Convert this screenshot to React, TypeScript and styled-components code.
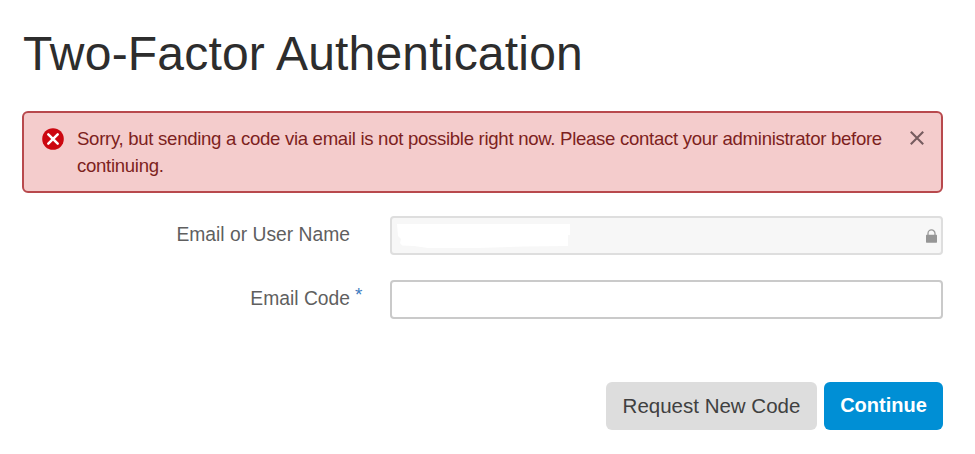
import React from "react";
import styled, { createGlobalStyle } from "styled-components";

const GlobalStyle = createGlobalStyle`
  *, *::before, *::after { box-sizing: border-box; }
  body {
    margin: 0;
    background: #fff;
    font-family: "Liberation Sans", Arial, sans-serif;
  }
`;

const Page = styled.main`
  width: 975px;
  height: 454px;
  padding: 26px 32px 0 22px;
  overflow: hidden;
`;

const Title = styled.h1`
  margin: 0;
  height: 85px;
  padding-left: 1px;
  font-size: 48px;
  line-height: 56px;
  font-weight: 400;
  letter-spacing: 0.2px;
  color: #2d2d2d;
  white-space: nowrap;
`;

const Alert = styled.section`
  display: flex;
  align-items: flex-start;
  height: 82px;
  padding: 12px 17px 0 18px;
  border: 2px solid #b8494d;
  border-radius: 6px;
  background: #f4cccc;
`;

const AlertIcon = styled.svg`
  flex: none;
  width: 22px;
  height: 22px;
  margin: 3px 13px 0 0;
`;

const AlertText = styled.p`
  flex: 1;
  margin: 0;
  font-size: 18.6px;
  line-height: 27px;
  letter-spacing: -0.3px;
  color: #7d1f20;
  white-space: nowrap;
`;

const CloseButton = styled.button`
  flex: none;
  display: flex;
  width: 14px;
  height: 14px;
  margin-top: 6px;
  padding: 0;
  border: 0;
  background: none;
`;

const Form = styled.form`
  padding-top: 23px;
`;

const Field = styled.div`
  display: grid;
  grid-template-columns: 328px 40px 553px;
  height: 39px;
  margin-bottom: 25px;
`;

const Label = styled.label`
  font-size: 19.3px;
  line-height: 37px;
  text-align: right;
  color: #5f5f5f;
  white-space: nowrap;
`;

const Required = styled.span`
  padding: 4px 0 0 5px;
  font-size: 19px;
  line-height: 22px;
  color: #3e7cc0;
`;

const InputBox = styled.div<{ $locked?: boolean }>`
  display: flex;
  align-items: center;
  justify-content: space-between;
  padding: 0 4px 0 2px;
  border: 2px solid ${(p) => (p.$locked ? "#dedede" : "#cacaca")};
  border-radius: 4px;
  background: ${(p) => (p.$locked ? "#f7f7f7" : "#fff")};
`;

const Redaction = styled.svg`
  width: 176px;
  height: 26px;
`;

const TextInput = styled.input`
  width: 100%;
  height: 100%;
  padding: 0;
  border: 0;
  outline: 0;
  background: transparent;
  font: inherit;
`;

const Actions = styled.div`
  display: flex;
  justify-content: flex-end;
  gap: 7px;
  padding-top: 38px;
`;

const Button = styled.button<{ $primary?: boolean }>`
  width: ${(p) => (p.$primary ? 119 : 211)}px;
  height: 48px;
  padding: ${(p) => (p.$primary ? "0 0 2px" : "0")};
  border: 0;
  border-radius: 6px;
  background: ${(p) => (p.$primary ? "#008fd5" : "#dddddd")};
  color: ${(p) => (p.$primary ? "#fff" : "#404040")};
  font-family: inherit;
  font-size: ${(p) => (p.$primary ? 20 : 20.5)}px;
  font-weight: ${(p) => (p.$primary ? 700 : 400)};
  white-space: nowrap;
`;

export default function App() {
  return (
    <>
      <GlobalStyle />
      <Page>
        <Title>Two-Factor Authentication</Title>
        <Alert role="alert">
          <AlertIcon viewBox="0 0 22 22">
            <circle cx="11" cy="11" r="10.8" fill="#cc0710" />
            <path d="M6.3 6.3l9.4 9.4M15.7 6.3l-9.4 9.4" stroke="#fff" strokeWidth="2.5" strokeLinecap="round" />
          </AlertIcon>
          <AlertText>
            Sorry, but sending a code via email is not possible right now. Please contact your administrator before
            <br />
            continuing.
          </AlertText>
          <CloseButton type="button" aria-label="Close">
            <svg width="14" height="14" viewBox="0 0 14 14">
              <path d="M.8.8l12.4 12.4M13.2.8L.8 13.2" stroke="#765c5f" strokeWidth="2.1" />
            </svg>
          </CloseButton>
        </Alert>
        <Form onSubmit={(e) => e.preventDefault()}>
          <Field>
            <Label>Email or User Name</Label>
            <span />
            <InputBox $locked>
              <Redaction viewBox="0 0 176 26">
                <path
                  d="M3 1H176V12H174V23L130 23.5L84 25H34L20 23L8 22.5L6 20L7 16L4 13Z"
                  fill="#fff"
                />
              </Redaction>
              <svg width="11" height="14" viewBox="0 0 11 14">
                <path d="M2 6V4.4a3.5 3.5 0 0 1 7 0V6" fill="none" stroke="#999" strokeWidth="1.3" />
                <rect y="5.7" width="11" height="8" rx=".6" fill="#969696" />
              </svg>
            </InputBox>
          </Field>
          <Field>
            <Label htmlFor="code">Email Code</Label>
            <Required>*</Required>
            <InputBox>
              <TextInput id="code" />
            </InputBox>
          </Field>
          <Actions>
            <Button type="button">Request New Code</Button>
            <Button type="submit" $primary>
              Continue
            </Button>
          </Actions>
        </Form>
      </Page>
    </>
  );
}
